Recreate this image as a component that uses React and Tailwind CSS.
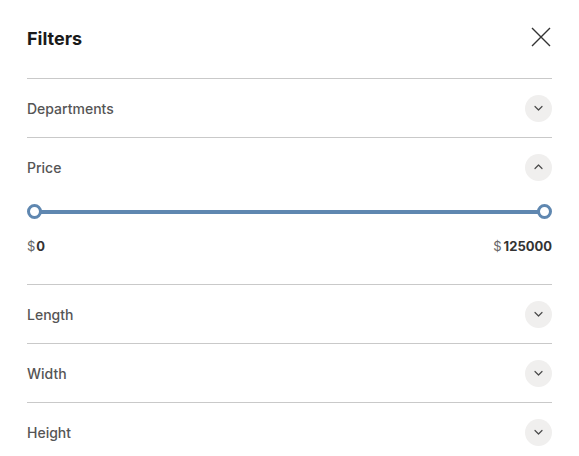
import { useState } from "react";

const sections = ["Length", "Width", "Height"];

const Chevron = ({ up }) => (
  <div className="w-[27px] h-[27px] rounded-full bg-[#f0efee] flex items-center justify-center">
    <svg width="9" height="6" viewBox="0 0 9 6" fill="none">
      <path
        d={up ? "M1 4.5l3.5-3.5 3.5 3.5" : "M1 1.5l3.5 3.5 3.5-3.5"}
        stroke="#4a4a4a"
        strokeWidth="1.2"
        strokeLinecap="round"
        strokeLinejoin="round"
      />
    </svg>
  </div>
);

const Row = ({ label, open }) => (
  <div className="h-[58px] flex items-center justify-between">
    <span className="text-[14px] font-medium text-[#555]">{label}</span>
    <Chevron up={open} />
  </div>
);

export default function App() {
  const [min] = useState(0);
  const [max] = useState(125000);

  return (
    <div className="w-[579px] h-[456px] bg-white px-[27px] font-['Inter',sans-serif] overflow-hidden">
      {/* Header */}
      <div className="h-[79px] flex items-center justify-between border-b border-[#c9c9c9]">
        <h1 className="text-[18px] font-bold text-[#1a1a1a] -mt-[2px]">Filters</h1>
        <svg width="20" height="20" viewBox="0 0 20 20" fill="none" className="mr-[1px] -mt-[4px]">
          <path d="M1 1l18 18M19 1L1 19" stroke="#333" strokeWidth="1.4" />
        </svg>
      </div>

      <div className="border-b border-[#c9c9c9]">
        <Row label="Departments" />
      </div>

      {/* Price */}
      <div className="border-b border-[#c9c9c9] pb-[28px]">
        <Row label="Price" open />
        <div className="relative h-[31px] flex items-center">
          <div className="w-full h-[4px] bg-[#5f87b0] mx-[8px]"></div>
          <div className="absolute left-0 top-[8px] w-[15px] h-[15px] rounded-full bg-white border-[3px] border-[#5f87b0]"></div>
          <div className="absolute right-0 top-[8px] w-[15px] h-[15px] rounded-full bg-white border-[3px] border-[#5f87b0]"></div>
        </div>
        <div className="mt-[11px] h-[18px] flex items-center justify-between text-[13px]">
          <span>
            <span className="text-[#666]">$</span>
            <span className="font-bold text-[#333] ml-[1px]">{min}</span>
          </span>
          <span>
            <span className="text-[#666]">$</span>
            <span className="font-bold text-[#333] ml-[2px]">{max}</span>
          </span>
        </div>
      </div>

      {sections.map((s, i) => (
        <div key={s} className={i < sections.length - 1 ? "border-b border-[#c9c9c9]" : ""}>
          <Row label={s} />
        </div>
      ))}
    </div>
  );
}
